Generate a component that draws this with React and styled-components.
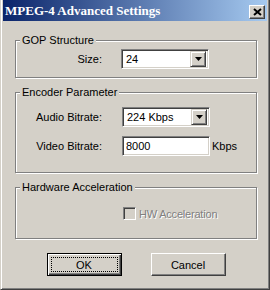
import styled, { createGlobalStyle, css } from "styled-components"

const GlobalStyle = createGlobalStyle`
  html, body {
    margin: 0;
    padding: 0;
    background: #d4d0c8;
  }
`

const face = "#d4d0c8"
const shadow = "#808080"
const darkShadow = "#404040"
const uiFont = `11px "Liberation Sans", Arial, sans-serif`

const Window = styled.div`
  width: 270px;
  height: 290px;
  box-sizing: border-box;
  display: flex;
  flex-direction: column;
  background: ${face};
  border-style: solid;
  border-width: 0 1px 1px 1px;
  border-color: ${face} ${darkShadow} ${darkShadow} ${face};
  box-shadow: inset 1px 0 0 #fff, inset -1px -1px 0 ${shadow};
  padding: 0 2px 2px 2px;
  font: ${uiFont};
  color: #000;
`

const TitleBar = styled.div`
  height: 21px;
  display: flex;
  align-items: center;
  justify-content: space-between;
  padding: 0 2px 0 2px;
  background: linear-gradient(to right, #0a246a, #a6caf0);
`

const TitleText = styled.span`
  font: bold 13px "Liberation Serif", "Times New Roman", serif;
  color: #fff;
  padding-top: 1px;
  white-space: nowrap;
`

const CloseButton = styled.button`
  width: 16px;
  height: 14px;
  margin-top: 2px;
  padding: 0;
  display: flex;
  align-items: center;
  justify-content: center;
  background: ${face};
  border: 1px solid;
  border-color: #fff ${darkShadow} ${darkShadow} #fff;
  box-shadow: inset -1px -1px 0 ${shadow};
`

const Body = styled.div`
  display: flex;
  flex-direction: column;
  padding: 13px 10px 0 12px;
`

const Group = styled.fieldset`
  margin: 0 0 ${(p) => p.$gap || 0}px 0;
  padding: ${(p) => p.$pad};
  min-width: 0;
  border: 1px solid ${shadow};
  box-shadow: inset 1px 1px 0 #fff, 1px 1px 0 #fff;
`

const Legend = styled.legend`
  margin-left: 4px;
  padding: 0 2px;
  line-height: 13px;
  background: ${face};
`

const FieldRow = styled.div`
  display: flex;
  align-items: center;
  height: 20px;
  & + & {
    margin-top: 9px;
  }
`

const Label = styled.span`
  width: 86px;
  margin-right: ${(p) => p.$gap}px;
  text-align: right;
  white-space: nowrap;
`

const Unit = styled.span`
  margin-left: 2px;
`

const sunken = css`
  box-sizing: border-box;
  border: 1px solid;
  border-color: ${shadow} #fff #fff ${shadow};
  box-shadow: inset 1px 1px 0 ${darkShadow}, inset -1px -1px 0 ${face};
  background: #fff;
`

const ComboBox = styled.div`
  ${sunken};
  width: 88px;
  height: 20px;
  padding: 2px;
  display: flex;
  align-items: center;
  justify-content: space-between;
`

const ComboValue = styled.span`
  padding-left: 2px;
`

const DropButton = styled.span`
  width: 16px;
  height: 16px;
  box-sizing: border-box;
  display: flex;
  align-items: center;
  justify-content: center;
  background: ${face};
  border: 1px solid;
  border-color: ${face} ${darkShadow} ${darkShadow} ${face};
  box-shadow: inset 1px 1px 0 #fff, inset -1px -1px 0 ${shadow};
`

const TextInput = styled.input`
  ${sunken};
  width: 88px;
  height: 20px;
  padding: 0 3px;
  margin: 0;
  font: ${uiFont};
  color: #000;
  outline: none;
`

const CheckRow = styled.label`
  display: flex;
  align-items: center;
  height: 13px;
  padding-left: 107px;
  color: ${shadow};
  text-shadow: 1px 1px 0 #fff;
  letter-spacing: -0.2px;
`

const CheckBox = styled.span`
  ${sunken};
  width: 13px;
  height: 13px;
  margin-right: 3px;
  background: ${face};
`

const ButtonRow = styled.div`
  display: flex;
  justify-content: center;
  gap: 29px;
  margin-top: 14px;
`

const PushButton = styled.button`
  width: 75px;
  height: 23px;
  padding: 3px;
  display: flex;
  font: ${uiFont};
  color: #000;
  background: ${face};
  border: 1px solid;
  border-color: #fff ${darkShadow} ${darkShadow} #fff;
  box-shadow: inset -1px -1px 0 ${shadow};
  ${(p) =>
    p.$default &&
    css`
      border-color: #000;
      box-shadow: inset 1px 1px 0 #fff, inset -1px -1px 0 ${darkShadow},
        inset -2px -2px 0 ${shadow};
    `}
`

const ButtonFace = styled.span`
  flex: 1;
  display: flex;
  align-items: center;
  justify-content: center;
  border: 1px dotted ${(p) => (p.$focused ? "#000" : "transparent")};
`

const Arrow = () => (
  <svg width="7" height="4" viewBox="0 0 7 4">
    <path d="M0 0h7L3.5 4z" fill="#000" />
  </svg>
)

const CloseGlyph = () => (
  <svg width="9" height="8" viewBox="0 0 9 8">
    <path d="M1 1l7 6M8 1l-7 6" stroke="#000" strokeWidth="2" />
  </svg>
)

const App = () => {
  return (
    <>
      <GlobalStyle />
      <Window>
        <TitleBar>
          <TitleText>MPEG-4 Advanced Settings</TitleText>
          <CloseButton>
            <CloseGlyph />
          </CloseButton>
        </TitleBar>
        <Body>
          <Group $pad="2px 0 8px 0" $gap={8}>
            <Legend>GOP Structure</Legend>
            <FieldRow>
              <Label $gap={19}>Size:</Label>
              <ComboBox>
                <ComboValue>24</ComboValue>
                <DropButton>
                  <Arrow />
                </DropButton>
              </ComboBox>
            </FieldRow>
          </Group>
          <Group $pad="8px 0 16px 0" $gap={8}>
            <Legend>Encoder Parameter</Legend>
            <FieldRow>
              <Label $gap={20}>Audio Bitrate:</Label>
              <ComboBox>
                <ComboValue>224 Kbps</ComboValue>
                <DropButton>
                  <Arrow />
                </DropButton>
              </ComboBox>
            </FieldRow>
            <FieldRow>
              <Label $gap={20}>Video Bitrate:</Label>
              <TextInput defaultValue="8000" />
              <Unit>Kbps</Unit>
            </FieldRow>
          </Group>
          <Group $pad="13px 0 18px 0">
            <Legend>Hardware Acceleration</Legend>
            <CheckRow>
              <CheckBox />
              HW Acceleration
            </CheckRow>
          </Group>
          <ButtonRow>
            <PushButton $default>
              <ButtonFace $focused>OK</ButtonFace>
            </PushButton>
            <PushButton>
              <ButtonFace>Cancel</ButtonFace>
            </PushButton>
          </ButtonRow>
        </Body>
      </Window>
    </>
  )
}

export default App
